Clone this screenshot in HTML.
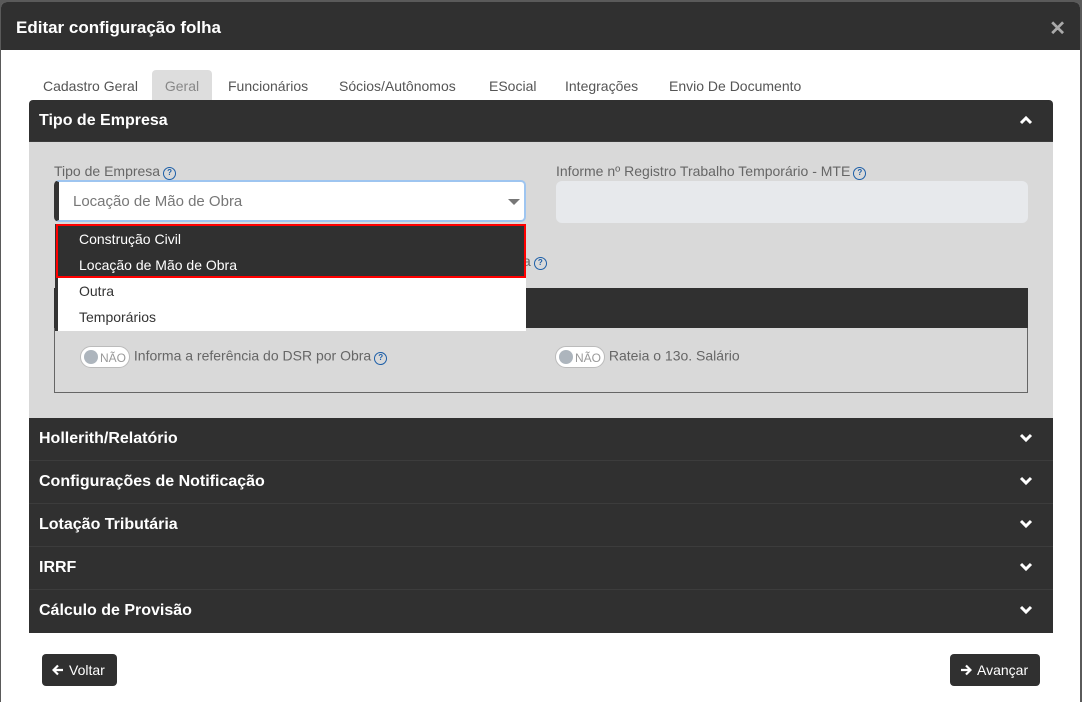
<!DOCTYPE html>
<html><head><meta charset="utf-8"><style>
*{box-sizing:border-box;margin:0;padding:0}
body{width:1082px;height:702px;background:#5a5a5a;font-family:"Liberation Sans",Arial,sans-serif;position:relative;overflow:hidden}
.modal{position:absolute;left:1px;top:2px;width:1079px;height:700px;background:#fff;border-radius:6px 6px 0 0;overflow:hidden}
.hdr{height:48px;background:#303030;color:#fff;font-weight:bold;font-size:17px;padding:16px 0 0 15px}
.x{position:absolute;right:14px;top:14px;color:#aaa;font-size:20px;font-weight:bold}
.tabs{position:absolute;top:68px;left:28px;height:30px;font-size:14px;color:#555}
.tab{position:absolute;top:0;height:30px;padding-top:8px;white-space:nowrap}
.abs{position:absolute}
.panel{position:absolute;left:28px;width:1024px}
.ph{background:#303030;color:#fff;font-weight:bold;font-size:16px;height:43px;padding:12px 10px;position:relative;border-bottom:1px solid #3c3c3c}
.chev{position:absolute;right:20px;top:15px}
.q{display:inline-block;width:13px;height:13px;border:1.5px solid #1d5fa8;border-radius:50%;color:#1d5fa8;font-size:8px;font-weight:bold;text-align:center;line-height:10px;vertical-align:1px;margin-left:3px}
.lbl{font-size:14px;color:#666}
.tog{display:inline-block;width:50px;height:22px;border:1px solid #bbb;border-radius:11px;background:#fff;vertical-align:middle;position:relative;font-size:12px;color:#999;padding:4px 0 0 19px}
.tog:before{content:"";position:absolute;left:3px;top:3px;width:14px;height:14px;border-radius:50%;background:#adb5bd}
.btn{position:absolute;top:652px;height:32px;background:#303030;color:#fff;border-radius:4px;font-size:14px;padding:8px 10px 0 10px;white-space:nowrap}
.btn svg{vertical-align:-1px;margin-right:5px}
</style></head><body>
<div class="modal">
<div class="hdr">Editar configuração folha</div>
<div class="x">✕</div>
<div class="tabs">
<div class="tab" style="left:14px">Cadastro Geral</div>
<div class="tab" style="left:123px;width:60px;background:#ddd;border-radius:4px 4px 0 0;color:#888;text-align:center">Geral</div>
<div class="tab" style="left:199px">Funcionários</div>
<div class="tab" style="left:310px">Sócios/Autônomos</div>
<div class="tab" style="left:460px">ESocial</div>
<div class="tab" style="left:536px">Integrações</div>
<div class="tab" style="left:640px">Envio De Documento</div>
</div>
<div class="panel" style="top:98px;border-radius:4px 4px 0 0;overflow:hidden">
<div class="ph" style="height:42px">Tipo de Empresa<svg class="chev" width="14" height="10" viewBox="0 0 14 10"><path d="M2 8L7 3L12 8" stroke="#fff" stroke-width="3" fill="none"/></svg></div>
<div style="background:#d9d9d9;height:276px;position:relative">
<div class="abs lbl" style="left:25px;top:21px">Tipo de Empresa<span class="q">?</span></div>
<div class="abs" style="left:25px;top:38px;width:472px;height:42px;background:#fff;border:2px solid #9ec5f0;border-left:5px solid #333;border-radius:5px;font-size:15px;color:#777;padding:11px 0 0 14px">Locação de Mão de Obra
<div class="abs" style="right:4px;top:17px;width:0;height:0;border:6px solid transparent;border-top:6px solid #777"></div></div>
<div class="abs lbl" style="left:527px;top:21px">Informe nº Registro Trabalho Temporário - MTE<span class="q">?</span></div>
<div class="abs" style="left:527px;top:39px;width:472px;height:42px;background:#e7e9ec;border-radius:6px"></div>
<div class="abs lbl" style="left:494px;top:111px">a<span class="q">?</span></div>
<div class="abs" style="left:25px;top:146px;width:974px;height:105px;border:1px solid #666;border-top:0">
<div style="background:#303030;height:40px;margin:0 -1px"></div>
<div class="abs lbl" style="left:25px;top:58px"><span class="tog">NÃO</span> Informa a referência do DSR por Obra<span class="q">?</span></div>
<div class="abs lbl" style="left:500px;top:58px"><span class="tog">NÃO</span> Rateia o 13o. Salário</div>
</div>
</div>
</div>
<div class="abs" style="left:54px;top:222px;width:471px;height:107px;background:#fff;border-left:3px solid #333;font-size:14px">
<div style="background:#303030;color:#fff;height:54px;border:2px solid #f00;margin-left:-2px;padding:0 0 0 21px;line-height:26px">Construção Civil<br>Locação de Mão de Obra</div>
<div style="color:#333;padding:0 0 0 21px;line-height:26px">Outra<br>Temporários</div>
</div>
<div class="panel" style="top:416px">
<div class="ph">Hollerith/Relatório<svg class="chev" width="14" height="10" viewBox="0 0 14 10"><path d="M2 2L7 7L12 2" stroke="#fff" stroke-width="3" fill="none"/></svg></div>
<div class="ph">Configurações de Notificação<svg class="chev" width="14" height="10" viewBox="0 0 14 10"><path d="M2 2L7 7L12 2" stroke="#fff" stroke-width="3" fill="none"/></svg></div>
<div class="ph">Lotação Tributária<svg class="chev" width="14" height="10" viewBox="0 0 14 10"><path d="M2 2L7 7L12 2" stroke="#fff" stroke-width="3" fill="none"/></svg></div>
<div class="ph">IRRF<svg class="chev" width="14" height="10" viewBox="0 0 14 10"><path d="M2 2L7 7L12 2" stroke="#fff" stroke-width="3" fill="none"/></svg></div>
<div class="ph" style="border:0">Cálculo de Provisão<svg class="chev" width="14" height="10" viewBox="0 0 14 10"><path d="M2 2L7 7L12 2" stroke="#fff" stroke-width="3" fill="none"/></svg></div>
</div>
<div class="btn" style="left:41px;width:75px"><svg width="12" height="12" viewBox="0 0 12 12"><path d="M11 6H2M6 1.5L1.5 6L6 10.5" stroke="#fff" stroke-width="2.2" fill="none"/></svg>Voltar</div>
<div class="btn" style="left:949px;width:90px"><svg width="12" height="12" viewBox="0 0 12 12"><path d="M1 6H10M6 1.5L10.5 6L6 10.5" stroke="#fff" stroke-width="2.2" fill="none"/></svg>Avançar</div>
</div>
</body></html>
